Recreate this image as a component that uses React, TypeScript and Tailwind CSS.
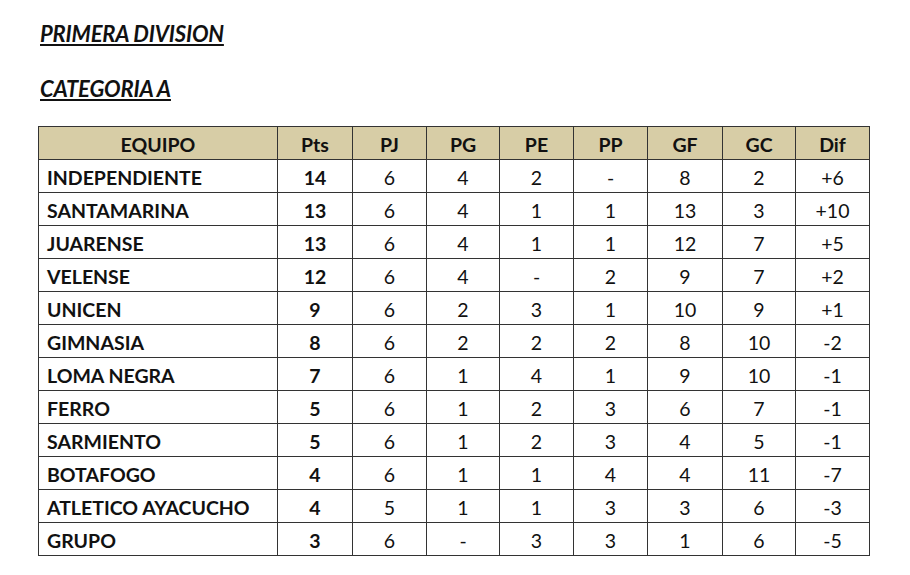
const rows: [string, string, string, string, string, string, string, string, string][] = [
  ["INDEPENDIENTE", "14", "6", "4", "2", "-", "8", "2", "+6"],
  ["SANTAMARINA", "13", "6", "4", "1", "1", "13", "3", "+10"],
  ["JUARENSE", "13", "6", "4", "1", "1", "12", "7", "+5"],
  ["VELENSE", "12", "6", "4", "-", "2", "9", "7", "+2"],
  ["UNICEN", "9", "6", "2", "3", "1", "10", "9", "+1"],
  ["GIMNASIA", "8", "6", "2", "2", "2", "8", "10", "-2"],
  ["LOMA NEGRA", "7", "6", "1", "4", "1", "9", "10", "-1"],
  ["FERRO", "5", "6", "1", "2", "3", "6", "7", "-1"],
  ["SARMIENTO", "5", "6", "1", "2", "3", "4", "5", "-1"],
  ["BOTAFOGO", "4", "6", "1", "1", "4", "4", "11", "-7"],
  ["ATLETICO AYACUCHO", "4", "5", "1", "1", "3", "3", "6", "-3"],
  ["GRUPO", "3", "6", "-", "3", "3", "1", "6", "-5"],
];

const headers = ["Pts", "PJ", "PG", "PE", "PP", "GF", "GC", "Dif"];
const widths = ["w-[75px]", "w-[74px]", "w-[73px]", "w-[74px]", "w-[74px]", "w-[75px]", "w-[73px]", "w-[74px]"];

export default function App() {
  return (
    <div className="w-[910px] h-[575px] bg-white text-[#111] font-['Lato','Liberation_Sans',sans-serif] overflow-hidden">
      <div className="pt-[22px] pl-[40px]">
        <h1 className="text-[22px] leading-[24px] font-bold italic underline underline-offset-[2px] decoration-[1.5px] tracking-[-0.2px]">
          PRIMERA DIVISION
        </h1>
        <h2 className="mt-[31px] text-[22px] leading-[24px] font-bold italic underline underline-offset-[2px] decoration-[1.5px] tracking-[-0.2px]">
          CATEGORIA A
        </h2>
      </div>

      <table className="ml-[38px] mt-[25px] table-fixed border-collapse text-[19.5px] leading-[26px]">
        <colgroup>
          <col className="w-[239px]" />
          {widths.map((w, i) => (
            <col key={i} className={w} />
          ))}
        </colgroup>
        <thead>
          <tr className="h-[33px] bg-[#d7cda6]">
            <th className="border border-[#333] pt-[4px] font-bold text-center">EQUIPO</th>
            {headers.map((h) => (
              <th key={h} className="border border-[#333] pt-[4px] font-bold text-center">{h}</th>
            ))}
          </tr>
        </thead>
        <tbody>
          {rows.map((r) => (
            <tr key={r[0]} className="h-[33px]">
              <td className="border border-[#333] pt-[4px] pl-[8px] font-bold text-left whitespace-nowrap">{r[0]}</td>
              <td className="border border-[#333] pt-[4px] font-bold text-center">{r[1]}</td>
              {r.slice(2).map((v, i) => (
                <td key={i} className="border border-[#333] pt-[4px] text-center">{v}</td>
              ))}
            </tr>
          ))}
        </tbody>
      </table>
    </div>
  );
}
